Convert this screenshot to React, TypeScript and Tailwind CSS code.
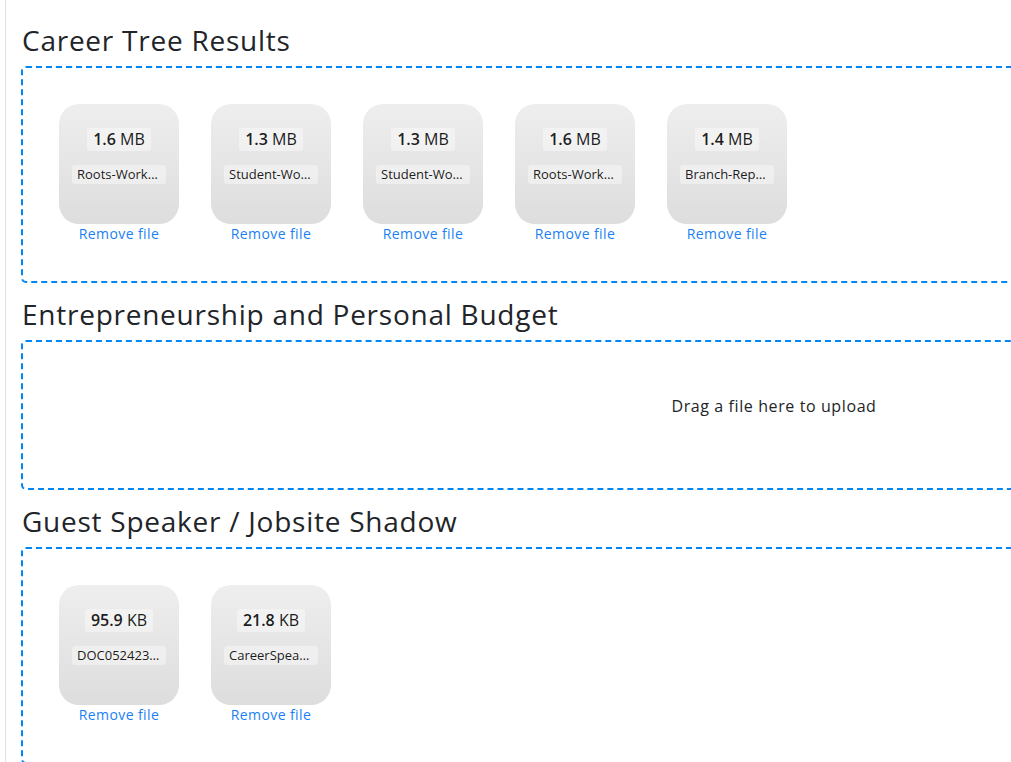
import React from 'react';

interface UploadedFile {
  size: string;
  unit: string;
  name: string;
}

interface Section {
  title: string;
  files: UploadedFile[];
}

const sections: Section[] = [
  {
    title: 'Career Tree Results',
    files: [
      { size: '1.6', unit: 'MB', name: 'Roots-Worksheet.pdf' },
      { size: '1.3', unit: 'MB', name: 'Student-Worksheet.pdf' },
      { size: '1.3', unit: 'MB', name: 'Student-Worksheet-2.pdf' },
      { size: '1.6', unit: 'MB', name: 'Roots-Worksheet-2.pdf' },
      { size: '1.4', unit: 'MB', name: 'Branch-Report.pdf' },
    ],
  },
  { title: 'Entrepreneurship and Personal Budget', files: [] },
  {
    title: 'Guest Speaker / Jobsite Shadow',
    files: [
      { size: '95.9', unit: 'KB', name: 'DOC052423-0001.pdf' },
      { size: '21.8', unit: 'KB', name: 'CareerSpeaker.pdf' },
    ],
  },
];

const FilePreview: React.FC<{ file: UploadedFile }> = ({ file }) => (
  <div className="w-[120px] shrink-0">
    <div className="h-[120px] w-[120px] rounded-[20px] bg-linear-to-b from-[#eeeeee] to-[#dddddd] pt-[24px] flex flex-col items-center text-[rgba(0,0,0,0.9)]">
      <span className="h-[23px] leading-[23px] px-[6px] rounded-[3px] bg-white/40 text-[16px]">
        <strong className="font-semibold">{file.size}</strong> {file.unit}
      </span>
      <div className="mt-[14px] w-[94px] h-[19px] leading-[19px] px-[5px] rounded-[3px] bg-white/40 text-[13px] whitespace-nowrap overflow-hidden text-ellipsis">
        {file.name}
      </div>
    </div>
    <a href="#" className="block text-center text-[14px] leading-[20px] tracking-[0.4px] text-[#1a7ff5]">
      Remove file
    </a>
  </div>
);

const DropArea: React.FC<{ files: UploadedFile[] }> = ({ files }) => {
  if (files.length === 0) {
    return (
      <div className="w-[1506px] min-h-[150px] border-2 border-dashed border-[#0087f7] rounded-[5px] px-[20px] py-[20px]">
        <div className="mt-[32px] text-center text-[16px] leading-[24px] tracking-[0.6px] text-[#212529]">
          Drag a file here to upload
        </div>
      </div>
    );
  }
  return (
    <div className="w-[1506px] border-2 border-dashed border-[#0087f7] rounded-[5px] p-[36px] pb-[37px] flex gap-8">
      {files.map((f, i) => (
        <FilePreview key={i} file={f} />
      ))}
    </div>
  );
};

export default function App() {
  return (
    <div className="w-[1011px] h-[762px] overflow-hidden bg-white font-['Open_Sans',sans-serif]">
      <div className="ml-[5px] w-[1600px] min-h-[762px] border-l border-[#dde3ea] pl-[15px] pt-[21px]">
        {sections.map((s, i) => (
          <section key={i} className={i > 0 ? 'mt-[12px]' : ''}>
            <h3 className="pt-[2px] text-[28px] leading-[34px] font-normal tracking-[0.75px] text-[#212529] mb-[9px] pl-px">
              {s.title}
            </h3>
            <DropArea files={s.files} />
          </section>
        ))}
      </div>
    </div>
  );
}
